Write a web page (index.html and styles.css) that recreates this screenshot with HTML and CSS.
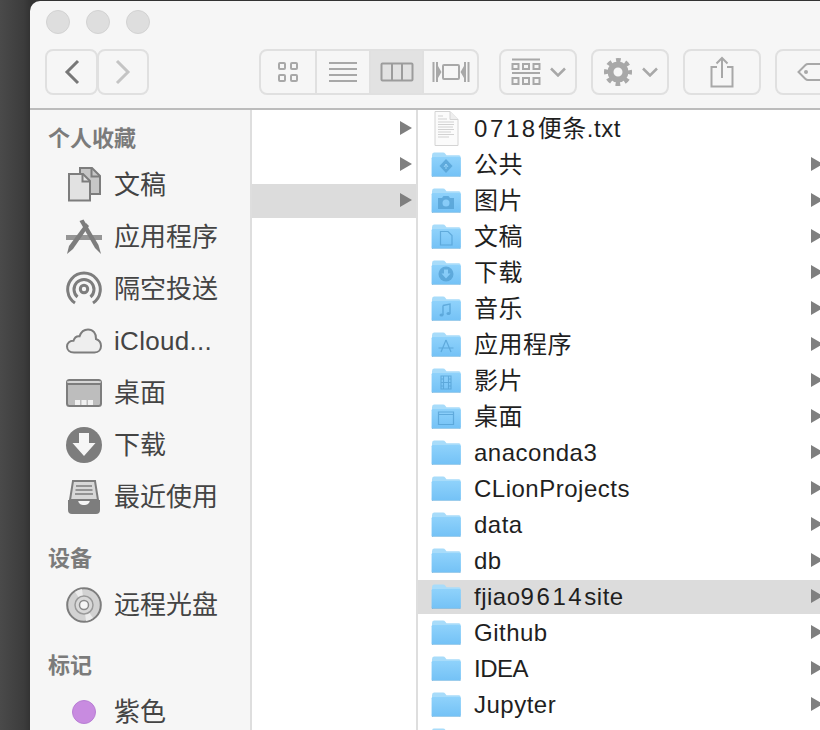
FILE: index.html
```html
<!DOCTYPE html>
<html lang="zh">
<head>
<meta charset="utf-8">
<title>Finder</title>
<link rel="stylesheet" href="styles.css">
</head>
<body>
<svg class="defs" width="0" height="0" aria-hidden="true">
  <defs>
    <linearGradient id="fg" x1="0" y1="0" x2="0" y2="1"><stop offset="0" stop-color="#8fd2fb"/><stop offset="1" stop-color="#74c2f6"/></linearGradient>
    <symbol id="folder" viewBox="0 0 30 25">
      <path d="M1 3.2Q1 .6 3 .6H12Q13.5.6 14.5 2L15.5 3.2H28Q29.6 3.2 29.6 5V22.5Q29.6 24 28 24H2.6Q1 24 1 22.5Z" fill="#a8dcfa"/>
      <path d="M.6 6.2Q.6 5 2 5H28.3Q29.8 5 29.8 6.2V22.8Q29.8 24.2 28.3 24.2H2Q.6 24.2.6 22.8Z" fill="url(#fg)"/>
      <path d="M.6 22.6Q.6 24.4 2 24.4H28.3Q29.8 24.4 29.8 22.6V23.4Q29.8 25 28.3 25H2Q.6 25 .6 23.4Z" fill="#5fa9dc"/>
    </symbol>
    <symbol id="arrow" viewBox="0 0 14 16"><path d="M1 1V15L13 8Z" fill="#7f7f7f"/></symbol>
  </defs>
</svg>
<main class="window">
  <header class="toolbar">
    <div class="lights"><span class="light"></span><span class="light"></span><span class="light"></span></div>
    <div class="tools">
      <div class="nav">
        <button class="btn nav-btn"><svg width="18" height="26" viewBox="0 0 18 26"><path d="M15 2 4 13l11 11" fill="none" stroke="#777" stroke-width="3"/></svg></button>
        <button class="btn nav-btn fwd"><svg width="18" height="26" viewBox="0 0 18 26"><path d="M3 2l11 11L3 24" fill="none" stroke="#c4c4c4" stroke-width="3"/></svg></button>
      </div>
      <div class="seg">
        <div class="seg-item s1"><svg width="22" height="22" viewBox="0 0 22 22" fill="none" stroke="#a8a8a8" stroke-width="2"><rect x="2" y="2" width="6" height="6" rx="1"/><rect x="14" y="2" width="6" height="6" rx="1"/><rect x="2" y="14" width="6" height="6" rx="1"/><rect x="14" y="14" width="6" height="6" rx="1"/></svg></div>
        <div class="seg-item s2"><svg width="30" height="22" viewBox="0 0 30 22" stroke="#a8a8a8" stroke-width="2"><path d="M1 2H29M1 8H29M1 14H29M1 20H29"/></svg></div>
        <div class="seg-item s3 on"><svg width="34" height="22" viewBox="0 0 34 20" fill="none" stroke="#9c9c9c" stroke-width="2"><rect x="1.5" y="1.5" width="31" height="17" rx="1"/><path d="M12 1.5V18.500M22 1.5V18.500"/></svg></div>
        <div class="seg-item s4"><svg width="38" height="24" viewBox="0 0 38 24"><g fill="none" stroke="#a8a8a8" stroke-width="2"><rect x="11" y="5" width="16" height="14" rx="1"/><path d="M1.500 2V22M5 2V22M36.500 2V22M33 2V22"/></g><path d="M6 6l3.500 6L6 18ZM32 6l-3.500 6L32 18Z" fill="#a8a8a8"/></svg></div>
      </div>
      <button class="btn menu-btn arrange"><svg width="30" height="28" viewBox="0 0 30 28" fill="none" stroke="#a8a8a8" stroke-width="2"><path d="M1 1.500H29M1 15H29"/><rect x="1.500" y="6" width="6" height="5"/><rect x="12" y="6" width="6" height="5"/><rect x="22.500" y="6" width="6" height="5"/><rect x="1.500" y="20" width="6" height="6"/><rect x="12" y="20" width="6" height="6"/><rect x="22.500" y="20" width="6" height="6"/></svg><svg class="chev" width="16" height="10" viewBox="0 0 16 10"><path d="M1 1.500l7 7 7-7" fill="none" stroke="#a8a8a8" stroke-width="2.500"/></svg></button>
      <button class="btn menu-btn gear"><svg width="30" height="30" viewBox="0 0 30 30" fill="none" stroke="#a8a8a8"><circle cx="15" cy="15" r="11.500" stroke-width="5" stroke-dasharray="4.520 4.510" stroke-dashoffset="2.260"/><circle cx="15" cy="15" r="7.500" stroke-width="6"/></svg><svg class="chev" width="16" height="10" viewBox="0 0 16 10"><path d="M1 1.500l7 7 7-7" fill="none" stroke="#a8a8a8" stroke-width="2.500"/></svg></button>
      <button class="btn share"><svg width="24" height="32" viewBox="0 0 24 32" fill="none" stroke="#a8a8a8" stroke-width="2"><path d="M7 11H1.500V30.500H22.500V11H17M12 22V2M6.500 7.500 12 2 17.500 7.500"/></svg></button>
      <button class="btn tag"><svg width="40" height="18" viewBox="0 0 40 18" fill="none"><path d="M40 1H11Q9.500 1 8.500 2L1.500 9l7 7Q9.500 17 11 17H40" stroke="#a8a8a8" stroke-width="2"/><circle cx="9" cy="9" r="2" fill="#a8a8a8"/></svg></button>
    </div>
  </header>
  <div class="body">
    <nav class="sidebar">
      <h2 class="side-head first">个人收藏</h2>
      <div class="side-row">
        <svg class="side-ico" width="36" height="36" viewBox="0 0 36 36"><path d="M14 1H26L34 9V27H14Z" fill="#c6c6c6" stroke="#7d7d7d" stroke-width="2"/><path d="M25.500 1.500V9.500H34" fill="none" stroke="#7d7d7d" stroke-width="2"/><path d="M3 7H17L24 14V33.500H3Z" fill="#e2e2e2" stroke="#7d7d7d" stroke-width="2"/><path d="M16.500 7.500V14.500H24" fill="none" stroke="#7d7d7d" stroke-width="2"/></svg>
        <span>文稿</span>
      </div>
      <div class="side-row">
        <svg class="side-ico" width="36" height="36" viewBox="0 0 36 36"><path d="M0 16H36V21H0Z" fill="#969696"/><path d="M13.500 2L17.500 .5L32.500 26L35 35L29 29Z" fill="#7d7d7d"/><path d="M20 4L23 7L7 30L1 35L3 27Z" fill="#7d7d7d"/></svg>
        <span>应用程序</span>
      </div>
      <div class="side-row">
        <svg class="side-ico" width="36" height="36" viewBox="0 0 36 36" fill="none" stroke="#7d7d7d" stroke-width="3"><path d="M9 32A16.300 16.300 0 1 1 27 32"/><path d="M11.500 26A10 10 0 1 1 24.500 26"/><circle cx="18" cy="18" r="3.700"/></svg>
        <span>隔空投送</span>
      </div>
      <div class="side-row">
        <svg class="side-ico" width="36" height="26" viewBox="0 0 36 26"><path d="M8 24.500C3.500 24.500 1 21.800 1 18.500C1 15 4 12.500 7.500 12.800C8.500 9.500 11 8 13.500 8.300C15 4 18.500 1.500 22 1.500C27 1.500 30.500 5.500 30 11C33 12 35 14.800 35 18C35 21.800 32.500 24.500 28.500 24.500Z" fill="#eee" stroke="#7d7d7d" stroke-width="2"/></svg>
        <span class="latin">iCloud...</span>
      </div>
      <div class="side-row">
        <svg class="side-ico" width="36" height="28" viewBox="0 0 36 28"><rect x="1" y="1" width="34" height="26" rx="2.500" fill="#bdbdbd" stroke="#7d7d7d" stroke-width="2"/><path d="M1 5H35" stroke="#7d7d7d" stroke-width="2"/><path d="M1 3H35" stroke="#eee"/><g fill="#f1f1f1"><rect x="9" y="21" width="5" height="5"/><rect x="15.500" y="21" width="5" height="5"/><rect x="22" y="21" width="5" height="5"/></g></svg>
        <span>桌面</span>
      </div>
      <div class="side-row">
        <svg class="side-ico" width="36" height="36" viewBox="0 0 36 36"><circle cx="18" cy="18" r="18" fill="#7d7d7d"/><path d="M13 6H23V16H29.500L18 29 6.500 16H13Z" fill="#f6f6f6"/></svg>
        <span>下载</span>
      </div>
      <div class="side-row">
        <svg class="side-ico" width="36" height="34" viewBox="0 0 36 34"><path d="M7 1H29L32 20H4Z" fill="#d8d8d8" stroke="#7d7d7d" stroke-width="2"/><path d="M10 6H26M9.500 10H26.500M9 14H27" stroke="#7d7d7d" stroke-width="1.600"/><path d="M2 20H12C12.500 24 15 25 18 25S23.500 24 24 20H34V30Q34 34 30 34H6Q2 34 2 30Z" fill="#7d7d7d"/></svg>
        <span>最近使用</span>
      </div>
      <h2 class="side-head device">设备</h2>
      <div class="side-row">
        <svg class="side-ico" width="36" height="36" viewBox="0 0 36 36"><circle cx="18" cy="18" r="16.800" fill="#d2d2d2" stroke="#7d7d7d" stroke-width="2"/><path d="M18 18 9 5A16 16 0 0 1 16 2ZM18 18 27 31A16 16 0 0 1 20 34Z" fill="#ececec"/><circle cx="18" cy="18" r="9" fill="#d9d9d9" stroke="#9a9a9a" stroke-width="1.500"/><circle cx="18" cy="18" r="4.500" fill="#f6f6f6" stroke="#8a8a8a" stroke-width="1.500"/></svg>
        <span>远程光盘</span>
      </div>
      <h2 class="side-head tags">标记</h2>
      <div class="side-row">
        <span class="dot-wrap"><span class="dot"></span></span>
        <span>紫色</span>
      </div>
    </nav>
    <section class="col col2">
      <div class="row"><svg class="arrow" width="14" height="16"><use href="#arrow"/></svg></div>
      <div class="row"><svg class="arrow" width="14" height="16"><use href="#arrow"/></svg></div>
      <div class="row sel"><svg class="arrow" width="14" height="16"><use href="#arrow"/></svg></div>
    </section>
    <section class="col col3">
      <div class="row">
        <svg class="ficon doc" width="30" height="36" viewBox="0 0 30 36"><path d="M4 .5H19L27 8.500V34.500H4Z" fill="#fbfbfb" stroke="#d4d4d4"/><path d="M19 .5V8.500H27" fill="#eee" stroke="#d4d4d4"/><path d="M7 5H12M7 8H16M7 11H23M7 13.500H23M7 16H22M7 18.500H23M7 21H20M7 23.500H23M7 26H18" stroke="#c8c8c8" stroke-width=".8"/></svg>
        <span class="name"><span class="num">0718</span>便条.txt</span>
      </div>
      <div class="row">
        <span class="ficon"><svg width="30" height="25"><use href="#folder"/></svg><svg class="glyph" width="30" height="25" viewBox="0 0 30 25"><path d="M15 7l6.500 7-6.500 7-6.500-7Z" fill="#4f9cd0"/><path d="M13 15l2-3 2 3M15 12V17" stroke="#9ed6f8" fill="none"/></svg></span>
        <span class="name">公共</span><svg class="arrow" width="14" height="16"><use href="#arrow"/></svg>
      </div>
      <div class="row">
        <span class="ficon"><svg width="30" height="25"><use href="#folder"/></svg><svg class="glyph" width="30" height="25" viewBox="0 0 30 25"><path d="M7 10H11L12.500 8H17.500L19 10H23V21H7Z" fill="#4f9cd0"/><circle cx="15" cy="15" r="3.500" fill="#8acdf8"/></svg></span>
        <span class="name">图片</span><svg class="arrow" width="14" height="16"><use href="#arrow"/></svg>
      </div>
      <div class="row">
        <span class="ficon"><svg width="30" height="25"><use href="#folder"/></svg><svg class="glyph" width="30" height="25" viewBox="0 0 30 25"><path d="M9.500 7.500H17L21 11.500V21H9.500Z" fill="none" stroke="#4f9cd0" stroke-width="1.200"/></svg></span>
        <span class="name">文稿</span><svg class="arrow" width="14" height="16"><use href="#arrow"/></svg>
      </div>
      <div class="row">
        <span class="ficon"><svg width="30" height="25"><use href="#folder"/></svg><svg class="glyph" width="30" height="25" viewBox="0 0 30 25"><circle cx="15" cy="14" r="7.500" fill="#4f9cd0"/><path d="M13 9.500H17V13.500H19.500L15 18.500 10.500 13.500H13Z" fill="#8acdf8"/></svg></span>
        <span class="name">下载</span><svg class="arrow" width="14" height="16"><use href="#arrow"/></svg>
      </div>
      <div class="row">
        <span class="ficon"><svg width="30" height="25"><use href="#folder"/></svg><svg class="glyph" width="30" height="25" viewBox="0 0 30 25"><path d="M12 9.500 19 8V17.500M12 9.500V19" fill="none" stroke="#4f9cd0" stroke-width="1.400"/><ellipse cx="10.500" cy="19" rx="2" ry="1.500" fill="#4f9cd0"/><ellipse cx="17.500" cy="17.500" rx="2" ry="1.500" fill="#4f9cd0"/></svg></span>
        <span class="name">音乐</span><svg class="arrow" width="14" height="16"><use href="#arrow"/></svg>
      </div>
      <div class="row">
        <span class="ficon"><svg width="30" height="25"><use href="#folder"/></svg><svg class="glyph" width="30" height="25" viewBox="0 0 30 25"><path d="M15 8 10 20M15 8l5 12M7.500 16H22.500" fill="none" stroke="#4f9cd0" stroke-width="1.200"/></svg></span>
        <span class="name">应用程序</span><svg class="arrow" width="14" height="16"><use href="#arrow"/></svg>
      </div>
      <div class="row">
        <span class="ficon"><svg width="30" height="25"><use href="#folder"/></svg><svg class="glyph" width="30" height="25" viewBox="0 0 30 25"><path d="M10 8H20V21H10ZM12.500 8V21M17.500 8V21M12.500 14.500H17.500M10 11H12.500M10 14.500H12.500M10 18H12.500M17.500 11H20M17.500 14.500H20M17.500 18H20" fill="none" stroke="#4f9cd0" stroke-width="1.100"/></svg></span>
        <span class="name">影片</span><svg class="arrow" width="14" height="16"><use href="#arrow"/></svg>
      </div>
      <div class="row">
        <span class="ficon"><svg width="30" height="25"><use href="#folder"/></svg><svg class="glyph" width="30" height="25" viewBox="0 0 30 25"><path d="M7.500 8H22.500V20.500H7.500ZM7.500 10.500H22.500" fill="none" stroke="#4f9cd0" stroke-width="1.200"/></svg></span>
        <span class="name">桌面</span><svg class="arrow" width="14" height="16"><use href="#arrow"/></svg>
      </div>
      <div class="row"><span class="ficon"><svg width="30" height="25"><use href="#folder"/></svg></span><span class="name">anaconda3</span><svg class="arrow" width="14" height="16"><use href="#arrow"/></svg></div>
      <div class="row"><span class="ficon"><svg width="30" height="25"><use href="#folder"/></svg></span><span class="name">CLionProjects</span><svg class="arrow" width="14" height="16"><use href="#arrow"/></svg></div>
      <div class="row"><span class="ficon"><svg width="30" height="25"><use href="#folder"/></svg></span><span class="name">data</span><svg class="arrow" width="14" height="16"><use href="#arrow"/></svg></div>
      <div class="row"><span class="ficon"><svg width="30" height="25"><use href="#folder"/></svg></span><span class="name">db</span><svg class="arrow" width="14" height="16"><use href="#arrow"/></svg></div>
      <div class="row sel"><span class="ficon"><svg width="30" height="25"><use href="#folder"/></svg></span><span class="name">fjiao<span class="num">9614</span>site</span><svg class="arrow" width="14" height="16"><use href="#arrow"/></svg></div>
      <div class="row"><span class="ficon"><svg width="30" height="25"><use href="#folder"/></svg></span><span class="name">Github</span><svg class="arrow" width="14" height="16"><use href="#arrow"/></svg></div>
      <div class="row"><span class="ficon"><svg width="30" height="25"><use href="#folder"/></svg></span><span class="name tight">IDEA</span><svg class="arrow" width="14" height="16"><use href="#arrow"/></svg></div>
      <div class="row"><span class="ficon"><svg width="30" height="25"><use href="#folder"/></svg></span><span class="name">Jupyter</span><svg class="arrow" width="14" height="16"><use href="#arrow"/></svg></div>
      <div class="row"><span class="ficon"><svg width="30" height="25"><use href="#folder"/></svg></span></div>
    </section>
  </div>
</main>
</body>
</html>
```

FILE: styles.css
```css
* { box-sizing: border-box; }
html, body { margin: 0; height: 730px; overflow: hidden; }
body {
  background: linear-gradient(90deg, #4a4a4a 0, #3c3c3c 24px, #333 30px);
  font-family: "Liberation Sans", "Noto Sans CJK SC", sans-serif;
  padding: 1px 0 0 30px;
  display: flex;
}
.defs { position: absolute; }
.window {
  width: 790px;
  height: 729px;
  background: #f6f6f6;
  border-radius: 10px 0 0 0;
  overflow: hidden;
  display: flex;
  flex-direction: column;
  flex: none;
}
.toolbar {
  height: 109px;
  border-bottom: 2px solid #bcbcbc;
  flex: none;
}
.lights { display: flex; gap: 16px; padding: 9px 0 0 16px; height: 48px; }
.light { width: 24px; height: 24px; border-radius: 50%; background: #dedede; border: 1px solid #d2d2d2; }
.tools { display: flex; align-items: flex-start; padding-left: 15px; }
.btn {
  height: 46px;
  background: #f6f6f6;
  border: 2px solid #e0e0e0;
  border-radius: 8px;
  padding: 0;
  display: flex;
  align-items: center;
  justify-content: center;
  flex: none;
}
.nav { display: flex; flex: none; }
.nav-btn { width: 53px; }
.nav-btn.fwd { width: 52px; margin-left: -1px; }
.seg {
  display: flex;
  height: 46px;
  margin-left: 110px;
  border: 2px solid #e0e0e0;
  border-radius: 8px;
  width: 220px;
  overflow: hidden;
  flex: none;
}
.seg-item { display: flex; align-items: center; justify-content: center; border-right: 2px solid #e0e0e0; flex: none; }
.s1 { width: 56px; }
.s2 { width: 54px; }
.s3 { width: 53px; }
.s4 { flex: 1; border-right: 0; }
.seg-item.on { background: #e2e2e2; }
.menu-btn { width: 78px; gap: 9px; }
.arrange { margin-left: 20px; }
.gear { margin-left: 14px; }
.share { width: 78px; margin-left: 14px; }
.tag { width: 78px; margin-left: 14px; justify-content: flex-start; padding-left: 20px; overflow: hidden; }
.body { display: flex; flex: 1; min-height: 0; }
.sidebar {
  width: 222px;
  flex: none;
  border-right: 2px solid #dedede;
  padding: 0 0 0 18px;
}
.side-head {
  margin: 0 0 6px;
  font-size: 22px;
  line-height: 28px;
  font-weight: 700;
  color: #7b7b7b;
}
.side-head.first { margin-top: 15px; }
.side-head.device { margin-top: 22px; }
.side-head.tags { margin-top: 21px; }
.side-row {
  display: flex;
  align-items: center;
  height: 52px;
  font-size: 26px;
  line-height: 34px;
  color: #444;
  gap: 12px;
  padding-left: 18px;
}
.side-ico { flex: none; width: 36px; }
.side-row span { white-space: nowrap; }
.latin { letter-spacing: .3px; }
.dot-wrap { width: 36px; display: flex; justify-content: center; }
.dot { width: 24px; height: 24px; border-radius: 50%; background: #c88be0; border: 1px solid #b87fd4; }
.col { padding-top: 2px; flex: none; overflow: hidden; }
.col2 { width: 166px; border-right: 2px solid #dedede; background: #fff; }
.col3 { flex: 1; background: #fff; min-width: 0; }
.row {
  height: 34px;
  margin-bottom: 2px;
  display: flex;
  align-items: center;
  position: relative;
}
.sel { background: #dcdcdc; }
.col2 .row { justify-content: flex-end; padding-right: 3px; }
.col2 .arrow { margin-bottom: 2px; }
.ficon { position: relative; width: 30px; height: 25px; margin: 0 0 2px 13px; flex: none; display: block; }
.ficon svg { display: block; }
.ficon.doc { height: 36px; margin-bottom: 0; }
.glyph { position: absolute; left: 0; top: 0; opacity: .7; }
.name {
  font-size: 24px;
  line-height: 30px;
  color: #1f1f1f;
  margin-left: 13px;
  letter-spacing: .5px;
  white-space: nowrap;
  flex: 1;
}
.num { letter-spacing: 2.6px; }
.tight { letter-spacing: -.5px; }
.col3 .arrow { position: absolute; left: 392px; top: 8px; }
```
